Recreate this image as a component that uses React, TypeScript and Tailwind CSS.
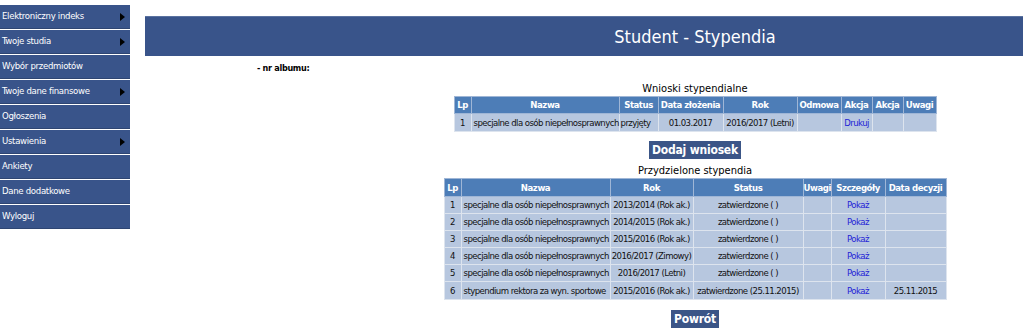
const menu: [string, boolean][] = [
  ["Elektroniczny indeks", true],
  ["Twoje studia", true],
  ["Wybór przedmiotów", false],
  ["Twoje dane finansowe", true],
  ["Ogłoszenia", false],
  ["Ustawienia", true],
  ["Ankiety", false],
  ["Dane dodatkowe", false],
  ["Wyloguj", false],
];

const przydzielone = [
  ["1", "specjalne dla osób niepełnosprawnych", "2013/2014 (Rok ak.)", "zatwierdzone ( )", ""],
  ["2", "specjalne dla osób niepełnosprawnych", "2014/2015 (Rok ak.)", "zatwierdzone ( )", ""],
  ["3", "specjalne dla osób niepełnosprawnych", "2015/2016 (Rok ak.)", "zatwierdzone ( )", ""],
  ["4", "specjalne dla osób niepełnosprawnych", "2016/2017 (Zimowy)", "zatwierdzone ( )", ""],
  ["5", "specjalne dla osób niepełnosprawnych", "2016/2017 (Letni)", "zatwierdzone ( )", ""],
  ["6", "stypendium rektora za wyn. sportowe", "2015/2016 (Rok ak.)", "zatwierdzone (25.11.2015)", "25.11.2015"],
];

const th =
  "border border-[#9fb6d6] bg-[#4d7db7] text-white font-bold px-0 whitespace-nowrap text-[9.5px] tracking-[-0.45px] leading-none";
const td =
  "border border-[#dde4ee] bg-[#b7c7df] text-[#111] px-[1px] whitespace-nowrap text-[9.5px] tracking-[-0.55px] leading-none";

function Sidebar() {
  return (
    <nav className="w-[130px] pt-[5px] flex flex-col gap-[1px] shrink-0">
      {menu.map(([label, arrow]) => (
        <div
          key={label}
          className="h-[24px] shrink-0 bg-[#39548a] text-white text-[9.5px] tracking-[-0.3px] flex items-center justify-between pl-[2px] pr-[5px] border-b border-[#2e4572]"
        >
          <span>{label}</span>
          {arrow && (
            <span className="w-0 h-0 border-y-[4px] border-y-transparent border-l-[5px] border-l-black" />
          )}
        </div>
      ))}
    </nav>
  );
}

export default function App() {
  return (
    <div
      className="w-[1023px] h-[334px] overflow-hidden bg-white flex items-start gap-[15px]"
      style={{ fontFamily: '"DejaVu Sans Condensed", "DejaVu Sans", sans-serif' }}
    >
      <Sidebar />
      <main className="w-[1100px] shrink-0 pt-[16px]">
        <div className="h-[40px] bg-[#39548a] border-t border-[#5a72a0] flex items-center justify-center text-white text-[18px]">
          Student - Stypendia
        </div>
        <div className="pl-[112px] pt-[7px] text-[9px] tracking-[-0.3px] leading-[11px] font-bold text-black">
          - nr albumu:
        </div>
        <div className="flex flex-col items-center">
          <div className="mt-[8px] text-[11px] text-black leading-[14px]">Wnioski stypendialne</div>
          <table className="border-collapse border border-[#8f9aab] w-[482px] table-fixed">
            <colgroup>
              <col className="w-[17px]" />
              <col className="w-[148px]" />
              <col className="w-[39px]" />
              <col className="w-[65px]" />
              <col className="w-[74px]" />
              <col className="w-[44px]" />
              <col className="w-[31px]" />
              <col className="w-[31px]" />
              <col className="w-[33px]" />
            </colgroup>
            <thead>
              <tr className="h-[17px]">
                {["Lp", "Nazwa", "Status", "Data złożenia", "Rok", "Odmowa", "Akcja", "Akcja", "Uwagi"].map((h, i) => (
                  <th key={i} className={th}>
                    {h}
                  </th>
                ))}
              </tr>
            </thead>
            <tbody>
              <tr className="h-[18px]">
                <td className={td + " text-center"}>1</td>
                <td className={td + " pl-[2px]"}>specjalne dla osób niepełnosprawnych</td>
                <td className={td}>przyjęty</td>
                <td className={td + " text-center"}>01.03.2017</td>
                <td className={td + " text-center"}>2016/2017 (Letni)</td>
                <td className={td}></td>
                <td className={td + " text-center"}>
                  <a className="text-[#1f1fd6]">Drukuj</a>
                </td>
                <td className={td}></td>
                <td className={td}></td>
              </tr>
            </tbody>
          </table>
          <button className="mt-[9px] h-[18px] px-[3px] bg-[#3b5587] text-white font-bold text-[12px] tracking-[-0.2px] leading-[18px]">
            Dodaj wniosek
          </button>
          <div className="mt-[5px] text-[11px] text-black leading-[14px]">Przydzielone stypendia</div>
          <table className="border-collapse border border-[#8f9aab] w-[502px] table-fixed">
            <colgroup>
              <col className="w-[17px]" />
              <col className="w-[149px]" />
              <col className="w-[83px]" />
              <col className="w-[110px]" />
              <col className="w-[28px]" />
              <col className="w-[54px]" />
              <col className="w-[61px]" />
            </colgroup>
            <thead>
              <tr className="h-[18px]">
                {["Lp", "Nazwa", "Rok", "Status", "Uwagi", "Szczegóły", "Data decyzji"].map((h) => (
                  <th key={h} className={th}>
                    {h}
                  </th>
                ))}
              </tr>
            </thead>
            <tbody>
              {przydzielone.map(([lp, nazwa, rok, status, data]) => (
                <tr key={lp} className={lp === "6" ? "h-[18px]" : "h-[17px]"}>
                  <td className={td + " text-center"}>{lp}</td>
                  <td className={td + " pl-[2px]"}>{nazwa}</td>
                  <td className={td + " text-center"}>{rok}</td>
                  <td className={td + " text-center"}>{status}</td>
                  <td className={td}></td>
                  <td className={td + " text-center"}>
                    <a className="text-[#1f1fd6]">Pokaż</a>
                  </td>
                  <td className={td + " text-center"}>{data}</td>
                </tr>
              ))}
            </tbody>
          </table>
          <button className="mt-[10px] h-[18px] px-[3px] bg-[#3b5587] text-white font-bold text-[12px] tracking-[-0.2px] leading-[18px]">
            Powrót
          </button>
        </div>
      </main>
    </div>
  );
}
